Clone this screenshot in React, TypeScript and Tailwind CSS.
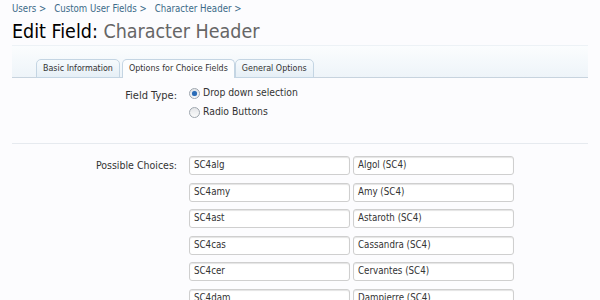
const choices = [
  ['SC4alg', 'Algol (SC4)'],
  ['SC4amy', 'Amy (SC4)'],
  ['SC4ast', 'Astaroth (SC4)'],
  ['SC4cas', 'Cassandra (SC4)'],
  ['SC4cer', 'Cervantes (SC4)'],
  ['SC4dam', 'Dampierre (SC4)'],
]

const font = { fontFamily: '"DejaVu Sans Condensed", Tahoma, "Liberation Sans", sans-serif' }

function Radio({ checked }: { checked?: boolean }) {
  return (
    <span className="relative flex h-[11px] w-[11px] items-center justify-center rounded-full border border-[#9ea6ae] bg-gradient-to-b from-[#e4e6e9] to-[#fbfbfb]">
      {checked && <span className="h-[5px] w-[5px] rounded-full bg-[#2a6bb6] shadow-[0_0_1px_#6fa3dd]" />}
    </span>
  )
}

export default function App() {
  return (
    <div className="min-h-[300px] w-[600px] overflow-hidden bg-[#fcfcfe] text-[11px] text-[#333]" style={font}>
      <div className="px-3 pt-[3px]">
        <nav className="flex h-[12px] items-center gap-[8px] text-[9.6px] text-[#3b6a88]">
          <span>Users &gt;</span>
          <span>Custom User Fields &gt;</span>
          <span>Character Header &gt;</span>
        </nav>
        <h1 className="mt-[6px] text-[19.5px] leading-[22px] text-black">
          Edit Field: <span className="text-[#666]">Character Header</span>
        </h1>
      </div>

      <div className="mx-3 mt-[2px] flex h-[33px] items-end border-t border-b border-t-[#edf2f6] border-b-[#c7d3de] bg-gradient-to-b from-[#fbfdfe] to-[#eef4f9] pl-6">
        <div className="-mb-px flex h-[19px] items-stretch text-[8.9px]">
          <div className="flex items-center rounded-t-[5px] border border-[#c4d5e3] bg-gradient-to-b from-[#f6fafd] to-[#e6eff6] px-[6px]">
            Basic Information
          </div>
          <div className="ml-[2px] flex items-center rounded-t-[5px] border border-b-0 border-[#c4d5e3] bg-[#fcfdfe] px-[6px]">
            Options for Choice Fields
          </div>
          <div className="flex items-center rounded-t-[5px] border border-[#c4d5e3] bg-gradient-to-b from-[#f6fafd] to-[#e6eff6] px-[6px]">
            General Options
          </div>
        </div>
      </div>

      <div className="mx-3">
        <div className="flex pt-[9px]">
          <div className="w-[165px] pt-[1px] text-right text-[11px]">Field Type:</div>
          <div className="ml-3 flex flex-col gap-[7px] text-[10.3px]">
            <label className="flex h-[12px] items-center gap-[3px]">
              <Radio checked />
              Drop down selection
            </label>
            <label className="flex h-[12px] items-center gap-[3px]">
              <Radio />
              Radio Buttons
            </label>
          </div>
        </div>

        <div className="mt-[25px] border-t border-[#e6eaef]" />

        <div className="flex pt-[12px]">
          <div className="w-[165px] pt-[2px] text-right text-[10.5px]">Possible Choices:</div>
          <div className="ml-3 flex flex-col gap-[7.5px]">
            {choices.map(([value, text]) => (
              <div key={value} className="flex gap-[3px]">
                <div className="flex h-[19px] w-[161px] items-center rounded-[3px] border border-[#cfcfcf] bg-white pl-[4px] text-[9.7px] shadow-[inset_0_1px_1px_#e4e4e4]">
                  {value}
                </div>
                <div className="flex h-[19px] w-[161px] items-center rounded-[3px] border border-[#cfcfcf] bg-white pl-[4px] text-[9.7px] shadow-[inset_0_1px_1px_#e4e4e4]">
                  {text}
                </div>
              </div>
            ))}
          </div>
        </div>
      </div>
    </div>
  )
}
